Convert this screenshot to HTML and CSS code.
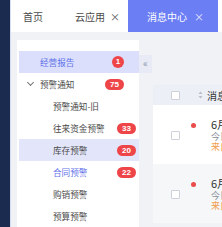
FILE: index.html
```html
<!DOCTYPE html>
<html lang="zh">
<head>
<meta charset="utf-8">
<link rel="stylesheet" href="styles.css">
</head>
<body>
<div class="app">
  <aside class="rail"></aside>
  <div class="main">
    <header class="tabs">
      <div class="tab">首页</div>
      <div class="tab">云应用<span class="x">×</span></div>
      <div class="tab active">消息中心<span class="x">×</span></div>
    </header>
    <div class="workspace">
      <nav class="menu">
        <div class="item lvl1 selected"><span class="label">经营报告</span><span class="badge round">1</span></div>
        <div class="item lvl1"><span class="chev"></span><span class="label">预警通知</span><span class="badge">75</span></div>
        <div class="item lvl2"><span class="label">预警通知-旧</span></div>
        <div class="item lvl2"><span class="label">往来资金预警</span><span class="badge">33</span></div>
        <div class="item lvl2 hover"><span class="label">库存预警</span><span class="badge">20</span></div>
        <div class="item lvl2 active"><span class="label">合同预警</span><span class="badge">22</span></div>
        <div class="item lvl2"><span class="label">购销预警</span></div>
        <div class="item lvl2"><span class="label">预算预警</span></div>
      </nav>
      <div class="collapse">«</div>
      <section class="content">
        <div class="thead">
          <span class="cell check"><span class="box"></span></span>
          <span class="sep"></span>
          <span class="sort"><svg width="5" height="8" viewBox="0 0 5 8"><path d="M2.5 0.5 L4.5 3 H0.5 Z M2.5 7.5 L4.5 5 H0.5 Z" fill="#b8bdc8"/></svg></span>
          <span class="th">消息内容</span>
        </div>
        <div class="row">
          <span class="cell check"><span class="box"></span></span>
          <span class="dot"></span>
          <div class="msg">
            <div class="title">6月12日经营日报</div>
            <div class="sub">今日营业收入汇总</div>
            <div class="from">来自经营报告</div>
          </div>
        </div>
        <div class="row alt">
          <span class="cell check"><span class="box"></span></span>
          <span class="dot"></span>
          <div class="msg">
            <div class="title">6月11日经营日报</div>
            <div class="sub">今日营业收入汇总</div>
            <div class="from">来自经营报告</div>
          </div>
        </div>
      </section>
    </div>
  </div>
</div>
</body>
</html>
```

FILE: styles.css
```css
* { box-sizing: border-box; }
html, body {
  margin: 0;
  padding: 0;
  width: 222px;
  height: 227px;
  overflow: hidden;
  font-family: "Noto Sans CJK SC", "Noto Sans", sans-serif;
}
.app {
  display: flex;
  height: 227px;
  overflow: hidden;
}
.rail {
  width: 10px;
  flex: none;
  background: #1b2b50;
}
.main {
  flex: 1;
  display: flex;
  flex-direction: column;
  border-left: 1px solid #d6def2;
  min-width: 0;
  overflow: hidden;
}
.tabs {
  height: 32px;
  flex: none;
  background: #fff;
  display: flex;
  align-items: stretch;
  padding-left: 12px;
  white-space: nowrap;
}
.tab {
  display: flex;
  align-items: center;
  font-size: 10px;
  color: #4a4a4a;
  margin-right: 32px;
}
.tab:nth-child(2) { margin-right: 8px; }
.tab .x {
  margin-left: 5px;
  font-size: 10px;
  color: #555;
}
.tab.active {
  background: #6c7ef4;
  color: #fff;
  padding: 0 14px 0 19px;
  margin-right: 0;
}
.tab.active .x { color: #e6e9ff; margin-left: 7px; }
.workspace {
  flex: 1;
  background: #f0f2f5;
  display: flex;
  align-items: flex-start;
  padding: 8px 0 0 6px;
  min-height: 0;
}
.menu {
  width: 122px;
  flex: none;
  background: #fff;
  height: 200px;
  padding-top: 11px;
  padding-left: 2px;
}
.item {
  height: 22px;
  display: flex;
  align-items: center;
  font-size: 8.6px;
  color: #4a4a4a;
  white-space: nowrap;
}
.item .label { flex: 1; }
.lvl1 { padding-left: 21px; }
.lvl1 .badge { margin-right: 15px; }
.lvl2 { padding-left: 34px; }
.lvl2 .badge { margin-right: 3px; }
.item.selected { background: #dbdffb; color: #5f72ea; }
.item.hover { background: #e3e6fb; }
.item.active { color: #5f72ea; }
.chev {
  width: 5px;
  height: 5px;
  border-right: 1px solid #777;
  border-bottom: 1px solid #777;
  transform: rotate(45deg);
  margin: -3px 7px 0 -12px;
}
.badge {
  background: #ee4549;
  color: #fff;
  font-family: "Liberation Sans", Arial, sans-serif;
  font-weight: bold;
  font-size: 8px;
  height: 11px;
  line-height: 11px;
  min-width: 19px;
  padding: 0 3px;
  border-radius: 6px;
  text-align: center;
}
.badge.round { min-width: 12px; width: 12px; height: 12px; line-height: 12px; padding: 0; }
.collapse {
  width: 13px;
  height: 18px;
  margin-top: 15px;
  flex: none;
  background: #e8ebf5;
  color: #8e95aa;
  font-size: 10px;
  line-height: 16px;
  text-align: center;
}
.content {
  flex: 1;
  margin: 45px 0 0 1px;
  min-width: 0;
  overflow: hidden;
}
.thead {
  height: 20px;
  background: #eceff6;
  display: flex;
  align-items: center;
  white-space: nowrap;
}
.cell.check {
  width: 36px;
  flex: none;
  display: flex;
  justify-content: center;
  padding-left: 8px;
}
.box {
  width: 9px;
  height: 9px;
  border: 1px solid #cdd1da;
  background: #fff;
  border-radius: 1px;
}
.sep {
  width: 1px;
  height: 12px;
  background: #d6dae4;
}
.sort { margin-left: 9px; display: flex; }
.th {
  margin-left: 4px;
  font-size: 10px;
  color: #333;
}
.row {
  height: 59px;
  background: #fff;
  display: flex;
  align-items: flex-start;
  white-space: nowrap;
}
.row.alt { background: #f6f7f9; }
.row .cell.check { padding-top: 26px; }
.dot {
  width: 5px;
  height: 5px;
  border-radius: 50%;
  background: #ea4b4b;
  flex: none;
  margin: 18px 0 0 2px;
}
.msg {
  margin: 13px 0 0 15px;
}
.title { font-size: 11px; color: #333; line-height: 13px; }
.sub { font-size: 9px; color: #8a8f99; line-height: 10px; margin-top: 1px; }
.from { font-size: 9px; color: #f2a14f; line-height: 10px; }
```
